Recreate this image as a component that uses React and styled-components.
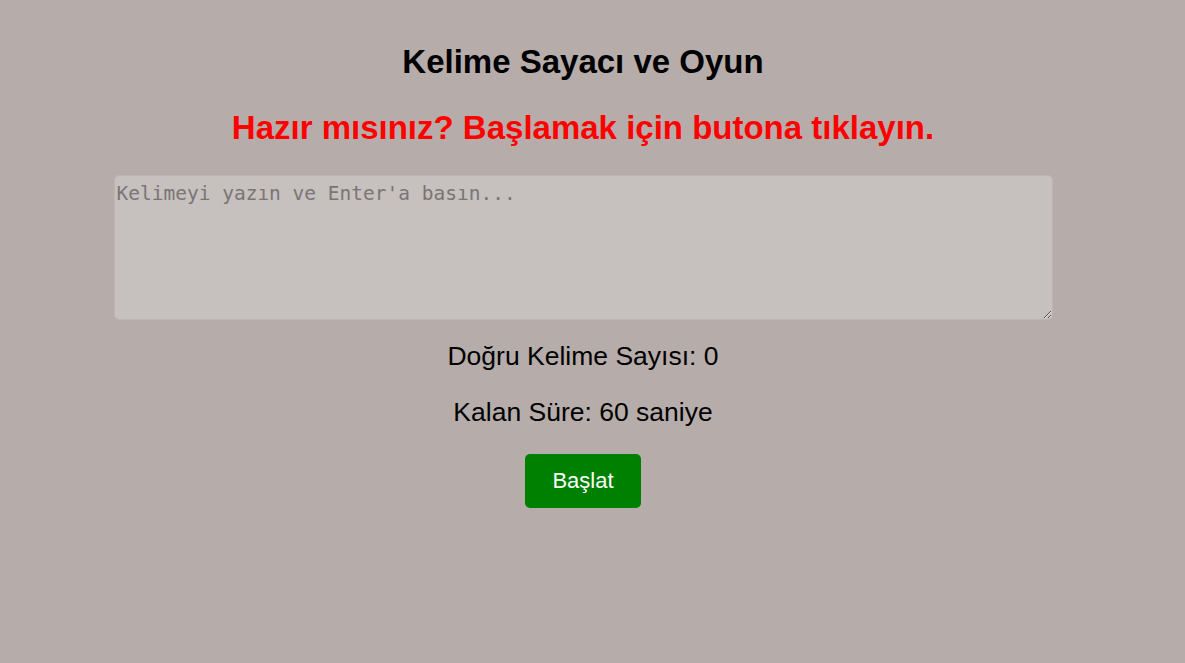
import React from "react";
import styled, { createGlobalStyle } from "styled-components";

const Global = createGlobalStyle`
  html, body { margin: 0; padding: 0; background: #b6adab; }
  body { font-family: "Liberation Sans", Arial, sans-serif; }
`;

const Page = styled.main`
  box-sizing: border-box;
  width: 1166px;
  padding: 8px 8px 0;
  display: flex;
  flex-direction: column;
  align-items: center;
  text-align: center;
`;

const Title = styled.h1`
  font-size: 33px;
  font-weight: bold;
  color: #000;
  margin: 35px 0 0;
  line-height: 38px;
`;

const Status = styled.h2`
  font-size: 33px;
  font-weight: bold;
  color: #ff0000;
  margin: 27px 0 0;
  line-height: 40px;
`;

const Input = styled.textarea`
  box-sizing: border-box;
  width: 939px;
  height: 145px;
  margin-top: 27px;
  padding: 6px 2px 4px;
  background: #c6c0bf;
  border: 1px solid #bdb5b3;
  border-radius: 5px;
  font-family: "DejaVu Sans Mono", monospace;
  font-size: 19.5px;
  line-height: 24px;
  color: #000;
  resize: vertical;
  outline: none;
  &::placeholder { color: #7a7574; }
`;

const Stat = styled.p`
  font-size: 26.5px;
  color: #000;
  margin: ${p => p.$top}px 0 0;
  line-height: 30px;
`;

const StartButton = styled.button`
  margin-top: 27px;
  width: 116px;
  height: 54px;
  background: #008000;
  color: #fff;
  border: none;
  border-radius: 5px;
  font-family: "Liberation Sans", Arial, sans-serif;
  font-size: 22px;
  cursor: pointer;
`;

export default function App() {
  return (
    <>
      <Global />
      <Page>
        <Title>Kelime Sayacı ve Oyun</Title>
        <Status>Hazır mısınız? Başlamak için butona tıklayın.</Status>
        <Input placeholder="Kelimeyi yazın ve Enter'a basın..." />
        <Stat $top={21}>Doğru Kelime Sayısı: 0</Stat>
        <Stat $top={26}>Kalan Süre: 60 saniye</Stat>
        <StartButton>Başlat</StartButton>
      </Page>
    </>
  );
}
